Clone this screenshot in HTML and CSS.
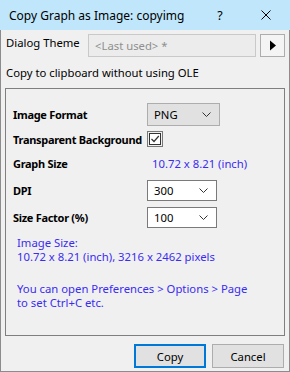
FILE: index.html
```html
<!DOCTYPE html>
<html>
<head>
<meta charset="utf-8">
<link rel="stylesheet" href="styles.css">
</head>
<body>
<div class="win">
  <div class="titlebar">
    <span class="title">Copy Graph as Image: copyimg</span>
    <span class="help">?</span>
    <span class="close"><svg width="10" height="10" viewBox="0 0 10 10"><path d="M0.5 0.5L9.5 9.5M9.5 0.5L0.5 9.5" stroke="#000" stroke-width="1"/></svg></span>
  </div>
  <div class="content">
    <div class="theme-row">
      <span class="theme-label">Dialog Theme</span>
      <div class="theme-input">&lt;Last used&gt; *</div>
      <div class="theme-btn"><svg width="8" height="11" viewBox="0 0 8 11"><path d="M1 0.5L7 5.5L1 10.5Z" fill="#000"/></svg></div>
    </div>
    <div class="ole">Copy to clipboard without using OLE</div>
    <div class="group">
      <div class="grid">
        <span class="lbl">Image Format</span>
        <div class="select gray"><span>PNG</span><svg width="9" height="5" viewBox="0 0 9 5"><path d="M0.5 0.5L4.5 4.5L8.5 0.5" fill="none" stroke="#333" stroke-width="1"/></svg></div>
        <span class="lbl">Transparent Background</span>
        <div class="check"><svg width="16" height="16" viewBox="0 0 16 16"><rect x="0.5" y="0.5" width="15" height="15" fill="none" stroke="#000" stroke-width="1" stroke-dasharray="1 1"/><rect x="2.5" y="2.5" width="11" height="11" fill="#fff" stroke="#333" stroke-width="1"/><path d="M4.5 8L7 10.5L11.8 5" fill="none" stroke="#333" stroke-width="1.2"/></svg></div>
        <span class="lbl">Graph Size</span>
        <span class="val">10.72 x 8.21 (inch)</span>
        <span class="lbl">DPI</span>
        <div class="select white"><span>300</span><svg width="9" height="5" viewBox="0 0 9 5"><path d="M0.5 0.5L4.5 4.5L8.5 0.5" fill="none" stroke="#333" stroke-width="1"/></svg></div>
        <span class="lbl">Size Factor (%)</span>
        <div class="select white"><span>100</span><svg width="9" height="5" viewBox="0 0 9 5"><path d="M0.5 0.5L4.5 4.5L8.5 0.5" fill="none" stroke="#333" stroke-width="1"/></svg></div>
      </div>
      <div class="info">
        <p>Image Size:<br>10.72 x 8.21 (inch), 3216 x 2462 pixels</p>
        <p class="gap">You can open Preferences &gt; Options &gt; Page<br>to set Ctrl+C etc.</p>
      </div>
    </div>
    <div class="buttons">
      <div class="btn primary">Copy</div>
      <div class="btn">Cancel</div>
    </div>
  </div>
</div>
</body>
</html>
```
FILE: styles.css
```css
* { box-sizing: border-box; }
html, body { margin: 0; padding: 0; }
body {
  font-family: "Noto Sans", "Open Sans", sans-serif;
  font-size: 11.3px;
  color: #000;
  background: #f0f0f0;
}
.win {
  width: 290px;
  height: 372px;
  display: flex;
  flex-direction: column;
  background: #f0f0f0;
}
.titlebar {
  height: 30px;
  background: #bfe6fb;
  display: flex;
  align-items: center;
  padding-left: 9px;
  padding-right: 3px;
  flex-shrink: 0;
}
.title { font-size: 12px; flex: 1; white-space: nowrap; }
.help { width: 20px; margin-right: 15px; font-size: 12.5px; text-align: center; flex-shrink: 0; }
.close { width: 42px; display: flex; align-items: center; justify-content: center; flex-shrink: 0; }
.content {
  flex: 1;
  border-left: 1px solid #8c8c8c;
  border-right: 1px solid #8c8c8c;
  border-bottom: 1px solid #8c8c8c;
  padding: 4px 4px 0 4px;
  display: flex;
  flex-direction: column;
}
.theme-row {
  display: flex;
  align-items: flex-start;
  height: 23px;
}
.theme-label { width: 83px; padding-left: 1px; line-height: 16px; margin-top: 1px; white-space: nowrap; }
.theme-input {
  width: 168px;
  height: 23px;
  border: 1px solid #c9c9c9;
  background: #ececec;
  color: #8f8f8f;
  padding-left: 6px;
  line-height: 21px;
}
.theme-btn {
  width: 25px;
  height: 23px;
  margin-left: 4px;
  border: 1px solid #adadad;
  background: #f4f4f4;
  display: flex;
  align-items: center;
  justify-content: center;
}
.ole { margin-top: 8px; line-height: 16px; padding-left: 1px; white-space: nowrap; }
.group {
  margin-top: 7px;
  width: 280px;
  height: 248px;
  border: 1px solid #7f7f7f;
  padding: 13px 0 0 7px;
}
.grid {
  display: grid;
  grid-template-columns: 134px 130px;
  grid-template-rows: 25px 24px 25px 28px 26px;
  align-items: center;
}
.lbl { font-weight: bold; white-space: nowrap; font-size: 11px; letter-spacing: -0.3px; }
.select {
  height: 22px;
  display: flex;
  align-items: center;
  justify-content: space-between;
  padding: 0 8px 0 6px;
}
.select.gray { width: 73px; background: #e1e1e1; border: 1px solid #adadad; height: 23px; }
.select.white { width: 70px; background: #fff; border: 1px solid #7a7a7a; height: 21px; }
.check { width: 16px; height: 16px; display: flex; }
.val { color: #3a2cf0; padding-left: 5px; white-space: nowrap; }
.info {
  color: #3a2cf0;
  margin-top: 6px;
  padding-left: 4px;
  line-height: 14px;
  white-space: nowrap;
}
.info p { margin: 0; }
.info p.gap { margin-top: 18px; }
.buttons {
  display: flex;
  justify-content: flex-end;
  gap: 6px;
  margin-top: 8px;
  padding-right: 1px;
}
.btn {
  width: 72px;
  height: 24px;
  border: 1px solid #adadad;
  background: #e1e1e1;
  display: flex;
  align-items: center;
  justify-content: center;
}
.btn.primary { border: 2px solid #0078d7; }
```
